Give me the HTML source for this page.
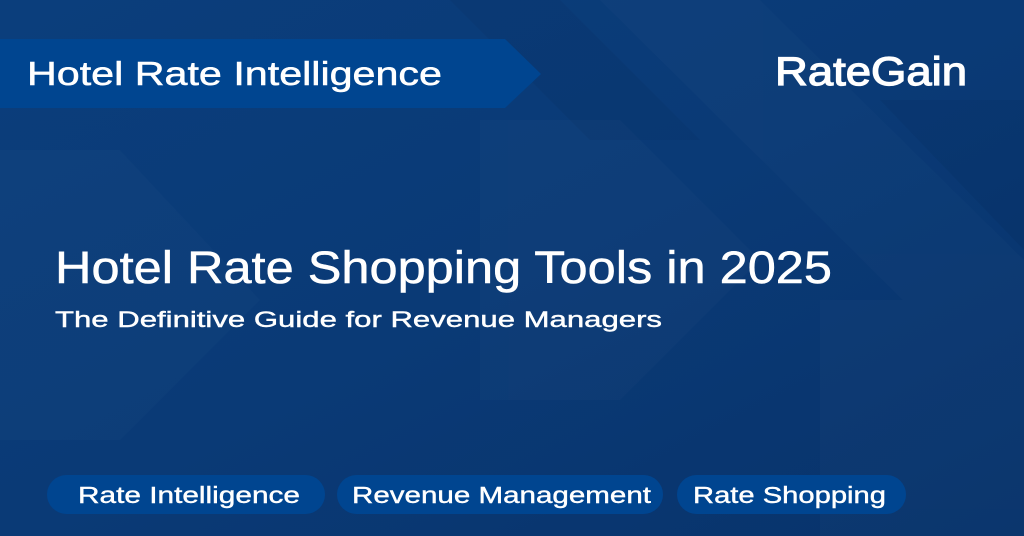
<!DOCTYPE html>
<html><head><style>html,body{margin:0;padding:0;width:1024px;height:536px;overflow:hidden;background:#083468}</style></head>
<body>
<svg width="1024" height="536" viewBox="0 0 1024 536" xmlns="http://www.w3.org/2000/svg" font-family="Liberation Sans, sans-serif">
<defs>
<linearGradient id="bg" x1="0" y1="0" x2="1" y2="1">
<stop offset="0" stop-color="#0b3e7c"/>
<stop offset="0.5" stop-color="#0a3a76"/>
<stop offset="1" stop-color="#08336b"/>
</linearGradient>
</defs>
<rect width="1024" height="536" fill="url(#bg)"/>
<g fill="#ffffff" opacity="0.015">
<polygon points="600,0 760,0 1024,260 1024,420"/>
<polygon points="0,150 120,150 260,300 120,440 0,440"/>
<polygon points="480,120 620,120 760,260 620,400 480,400"/>
<polygon points="820,300 960,300 1024,360 1024,536 820,536"/>
</g>
<g fill="#000" opacity="0.04">
<polygon points="450,0 560,0 700,140 590,140"/>
<polygon points="880,100 1024,100 1024,250"/>
</g>
<polygon points="0,39 505,39 541,74 505,108 0,108" fill="#004590"/>
<text x="27" y="85" fill="#fff" font-size="33" textLength="415" lengthAdjust="spacingAndGlyphs" stroke="#fff" stroke-width="0.5">Hotel Rate Intelligence</text>
<text x="775" y="85" fill="#fff" font-size="40" textLength="192" lengthAdjust="spacingAndGlyphs" stroke="#fff" stroke-width="1.2">RateGain</text>
<text x="55" y="283" fill="#fff" font-size="45" textLength="777" lengthAdjust="spacingAndGlyphs" stroke="#fff" stroke-width="0.5">Hotel Rate Shopping Tools in 2025</text>
<text x="55" y="327" fill="#fff" font-size="22" textLength="607" lengthAdjust="spacingAndGlyphs" stroke="#fff" stroke-width="0.4">The Definitive Guide for Revenue Managers</text>
<g fill="#004590">
<rect x="47" y="475" width="278" height="39" rx="19.5"/>
<rect x="337" y="475" width="326" height="39" rx="19.5"/>
<rect x="677" y="475" width="229" height="39" rx="19.5"/>
</g>
<g fill="#fff" font-size="23" stroke="#fff" stroke-width="0.4">
<text x="78" y="503" textLength="222" lengthAdjust="spacingAndGlyphs">Rate Intelligence</text>
<text x="352" y="503" textLength="299" lengthAdjust="spacingAndGlyphs">Revenue Management</text>
<text x="693" y="503" textLength="193" lengthAdjust="spacingAndGlyphs">Rate Shopping</text>
</g>
</svg>
</body></html>
